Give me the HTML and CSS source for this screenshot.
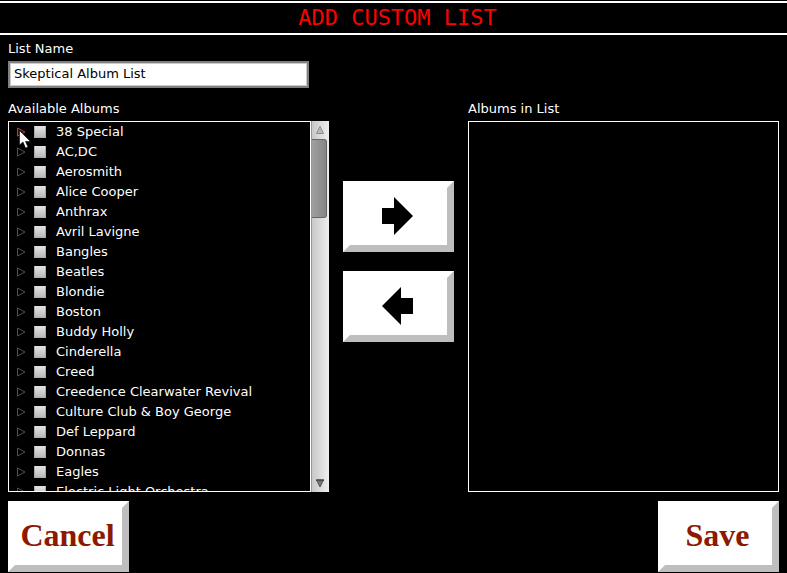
FILE: index.html
```html
<!DOCTYPE html>
<html lang="en">
<head>
<meta charset="utf-8">
<title>Add Custom List</title>
<link rel="stylesheet" href="styles.css">
</head>
<body>
<form class="page">
  <header class="title-bar"><h1>ADD CUSTOM LIST</h1></header>
  <div class="name-field">
    <label class="caption" for="list-name">List Name</label>
    <input class="name-input" id="list-name" type="text" value="Skeptical Album List">
  </div>
  <main class="columns">
    <section class="column">
      <h2 class="caption">Available Albums</h2>
      <div class="list-box">
        <ul class="tree" id="tree"></ul>
        <div class="scrollbar">
          <svg class="scroll-arrow" viewBox="0 0 10 10"><path d="M5 1.500 8.500 8.500H1.500Z" fill="#bbb" stroke="#8c8c8c"/></svg>
          <div class="track"><div class="thumb"></div></div>
          <svg class="scroll-arrow" viewBox="0 0 10 10"><path d="M1.500 2H8.500L5 9Z" fill="#777" stroke="#555"/><path d="M1 2H9" stroke="#333"/></svg>
        </div>
      </div>
    </section>
    <div class="transfer">
      <button class="bevel" type="button" aria-label="Add to list"><svg class="arrow" viewBox="0 0 32 38"><path d="M0 11H12V0L31 19 12 38V27H0Z"/></svg></button>
      <button class="bevel" type="button" aria-label="Remove from list"><svg class="arrow" viewBox="0 0 32 38"><path d="M31 11H19V0L0 19 19 38V27H31Z"/></svg></button>
    </div>
    <section class="column">
      <h2 class="caption">Albums in List</h2>
      <div class="list-box"><ul class="tree"></ul></div>
    </section>
  </main>
  <footer class="actions">
    <button class="bevel action" type="button">Cancel</button>
    <button class="bevel action" type="button">Save</button>
  </footer>
</form>
<svg class="pointer" viewBox="0 0 12 19" aria-hidden="true"><path d="M.5.5V15L4 12 6.500 18 9 17 6.500 11.500H11.500Z" fill="#fff" stroke="#000" stroke-width=".6"/></svg>
<script src="script.js"></script>
</body>
</html>
```
FILE: styles.css
```css
* { box-sizing: border-box; }
body {
  margin: 0;
  background: #000;
  color: #fff;
  font: 13px/20px "DejaVu Sans", sans-serif;
}
.page {
  display: flex;
  flex-direction: column;
  height: 100vh;
  min-height: 400px;
  padding: 1px 0;
}
.title-bar {
  border: 2px solid #fff;
  border-width: 2px 0;
  text-align: center;
}
.title-bar h1 {
  margin: 0;
  padding-left: 8px;
  color: #f00;
  font: 22px/30px "DejaVu Sans Mono", monospace;
}
.name-field {
  display: flex;
  flex-direction: column;
  padding: 4px 8px 0;
}
.caption {
  margin: 0;
  font-size: 13px;
  font-weight: normal;
  line-height: 20px;
}
.name-input {
  width: 301px;
  max-width: 100%;
  height: 27px;
  margin-top: 2px;
  padding: 0 4px 2px;
  border: 2px solid #808080;
  background: #fff;
  box-shadow: inset 0 0 0 1px #ccc;
  color: #000;
  font: inherit;
}
.columns {
  display: grid;
  grid-template-columns: minmax(0, 321fr) 111px minmax(0, 311fr);
  grid-template-rows: minmax(0, 1fr);
  gap: 14px;
  flex: 1;
  min-height: 0;
  padding: 11px 8px 9px;
}
.column {
  display: flex;
  flex-direction: column;
  min-height: 0;
  gap: 2px;
}
.list-box {
  display: flex;
  flex: 1;
  min-height: 0;
}
.tree {
  flex: 1;
  margin: 0;
  padding: 0 7px;
  overflow: hidden;
  border: 1px solid #fff;
  list-style: none;
}
.artist {
  display: flex;
  align-items: center;
  height: 20px;
}
.expander { width: 10px; height: 10px; }
.expander path { fill: none; stroke: #505050; }
.artist:first-child .expander path { fill: #2a0d08; stroke: #a04a38; }
.check {
  appearance: none;
  width: 12px;
  height: 12px;
  margin: 0 10px 0 8px;
  border: 1px solid #aaa;
  border-top-color: #ddd;
  background: linear-gradient(#e2e2e2, #bbb);
}
.scrollbar {
  display: flex;
  flex-direction: column;
  align-items: center;
  width: 18px;
  padding-right: 1px;
  border-left: 1px solid #999;
  background: linear-gradient(90deg, #c8c8c8, #eee);
}
.scroll-arrow { width: 10px; height: 10px; margin: 4px 0; }
.track { flex: 1; align-self: stretch; }
.thumb {
  width: 15px;
  height: 79px;
  border: 1px solid #666;
  border-left: 0;
  border-radius: 0 3px 3px 0;
  background: linear-gradient(90deg, #a0a0a0, #858585);
}
.transfer {
  display: flex;
  flex-direction: column;
  gap: 19px;
  padding-top: 82px;
}
.bevel {
  display: flex;
  align-items: center;
  justify-content: center;
  height: 71px;
  padding: 0 2px 2px 0;
  border: 7px solid;
  border-color: #fff #bebebe #bebebe #fff;
  border-radius: 0;
  background: #fff;
  color: #8b1a00;
}
.arrow { width: 32px; height: 38px; }
.arrow path { fill: #000; }
.actions {
  display: flex;
  justify-content: space-between;
  padding: 0 8px;
}
.action {
  width: 121px;
  font: bold 32px "Liberation Serif", serif;
}
.pointer {
  position: absolute;
  top: 130px;
  left: 19px;
  width: 12px;
  height: 19px;
}
```
FILE: script.js
```js
const artists = [
  "38 Special", "AC,DC", "Aerosmith", "Alice Cooper", "Anthrax",
  "Avril Lavigne", "Bangles", "Beatles", "Blondie", "Boston",
  "Buddy Holly", "Cinderella", "Creed", "Creedence Clearwater Revival",
  "Culture Club & Boy George", "Def Leppard", "Donnas", "Eagles",
  "Electric Light Orchestra"
];

const tree = document.getElementById("tree");
artists.forEach((name, i) => {
  const row = document.createElement("li");
  row.className = "artist";
  row.innerHTML =
    '<svg class="expander" viewBox="0 0 10 10"><path d="M1.500 1 9 5 1.500 9Z"/></svg>' +
    `<input class="check" type="checkbox" id="artist-${i}">` +
    `<label for="artist-${i}"></label>`;
  row.querySelector("label").textContent = name;
  tree.append(row);
});
```
